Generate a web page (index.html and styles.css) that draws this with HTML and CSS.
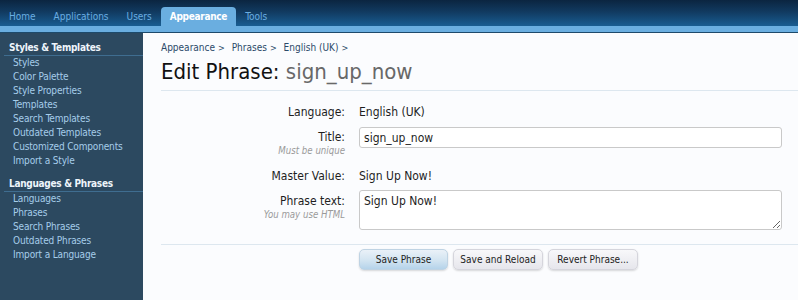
FILE: index.html
```html
<!DOCTYPE html>
<html lang="en">
<head>
<meta charset="utf-8">
<title>Edit Phrase: sign_up_now</title>
<link rel="stylesheet" href="styles.css">
</head>
<body>
<header class="topbar">
  <nav class="tabs">
    <a class="tab">Home</a>
    <a class="tab">Applications</a>
    <a class="tab">Users</a>
    <a class="tab tab-active">Appearance</a>
    <a class="tab">Tools</a>
  </nav>
</header>
<div class="strip"></div>
<div class="main">
  <aside class="sidebar">
    <div class="side-group">
      <h3 class="side-heading">Styles &amp; Templates</h3>
      <ul class="side-list">
        <li>Styles</li>
        <li>Color Palette</li>
        <li>Style Properties</li>
        <li>Templates</li>
        <li>Search Templates</li>
        <li>Outdated Templates</li>
        <li>Customized Components</li>
        <li>Import a Style</li>
      </ul>
    </div>
    <div class="side-group">
      <h3 class="side-heading">Languages &amp; Phrases</h3>
      <ul class="side-list">
        <li>Languages</li>
        <li>Phrases</li>
        <li>Search Phrases</li>
        <li>Outdated Phrases</li>
        <li>Import a Language</li>
      </ul>
    </div>
  </aside>
  <section class="content">
    <div class="crumbs">
      <span class="crumb">Appearance</span><span class="arrow">&gt;</span>
      <span class="crumb">Phrases</span><span class="arrow">&gt;</span>
      <span class="crumb">English (UK)</span><span class="arrow">&gt;</span>
    </div>
    <h1 class="title">Edit Phrase: <span class="title-sub">sign_up_now</span></h1>
    <form class="form">
      <div class="row row-lang">
        <div class="label">Language:</div>
        <div class="value">English (UK)</div>
      </div>
      <div class="row row-title">
        <div class="label label-input">Title:<span class="hint">Must be unique</span></div>
        <div class="value"><input class="text-input" type="text" value="sign_up_now"></div>
      </div>
      <div class="row row-master">
        <div class="label">Master Value:</div>
        <div class="value">Sign Up Now!</div>
      </div>
      <div class="row row-text">
        <div class="label label-area">Phrase text:<span class="hint">You may use HTML</span></div>
        <div class="value"><textarea class="text-area">Sign Up Now!</textarea></div>
      </div>
      <div class="buttons">
        <button type="button" class="btn btn-primary">Save Phrase</button>
        <button type="button" class="btn">Save and Reload</button>
        <button type="button" class="btn">Revert Phrase...</button>
      </div>
    </form>
  </section>
</div>
</body>
</html>
```
FILE: styles.css
```css
* { box-sizing: border-box; }
html, body { margin: 0; padding: 0; }
body {
  width: 798px;
  height: 300px;
  overflow: hidden;
  font-family: "DejaVu Sans Condensed", "DejaVu Sans", sans-serif;
  font-size: 11px;
  background: #fbfcfe;
  color: #1a1a1a;
}

.topbar {
  height: 26px;
  background: linear-gradient(to bottom, #0b2540 0%, #113a60 45%, #195d92 100%);
  display: flex;
  align-items: flex-end;
}
.tabs { display: flex; padding-left: 0; }
.tab {
  display: block;
  height: 19px;
  line-height: 20px;
  padding: 0 9px;
  margin-right: 0;
  color: #6aaee2;
  font-size: 10px;
  border-radius: 4px 4px 0 0;
}
.tab-active {
  background: #6aaee0;
  color: #ffffff;
  font-weight: bold;
  letter-spacing: -0.3px;
}
.strip {
  height: 7px;
  background: #6aaee0;
  border-bottom: 1px solid #1d4a6b;
}

.main { display: flex; height: 267px; }

.sidebar {
  width: 143px;
  flex: none;
  background: #2c4960;
  padding-top: 8px;
}
.side-group + .side-group { margin-top: 9px; }
.side-heading {
  margin: 0 0 0 4px;
  padding-left: 5px;
  font-size: 10px;
  line-height: 14px;
  font-weight: bold;
  letter-spacing: -0.3px;
  color: #eef5fb;
  border-bottom: 1px solid #3f6d90;
}
.side-list { list-style: none; margin: 0; padding: 0; }
.side-list li {
  padding-left: 13px;
  line-height: 14px;
  color: #a6cdea;
  font-size: 10px;
  letter-spacing: -0.15px;
}

.content {
  flex: 1;
  padding: 8px 0 0 18px;
  background: #fbfcfe;
}
.crumbs {
  line-height: 14px;
  color: #2b4a69;
  font-size: 10px;
}
.crumb { margin-right: 3px; }
.arrow { margin-right: 4px; font-size: 9px; }

.title {
  margin: 3px 0 0;
  font-size: 22px;
  font-weight: normal;
  line-height: 28px;
  color: #111111;
  padding-bottom: 4px;
  border-bottom: 1px solid #dde7ef;
}
.title-sub { color: #686868; }

.form { padding-top: 13px; padding-right: 16px; }
.row {
  display: grid;
  grid-template-columns: 184px 1fr;
  column-gap: 14px;
  font-size: 12px;
  line-height: 16px;
  color: #1e1e1e;
}
.label { text-align: right; }
.hint {
  display: block;
  font-size: 9.6px;
  line-height: 11px;
  font-style: italic;
  color: #9a9a9a;
}
.row-lang { margin-bottom: 7px; }
.row-title { margin-bottom: 12px; }
.row-master { margin-bottom: 6px; }
.row-text {
  margin-right: -16px;
  padding-right: 16px;
  padding-bottom: 14px;
  border-bottom: 1px solid #dde7ef;
}
.label-input { padding-top: 2px; }
.label-area { padding-top: 3px; }

.text-input {
  display: block;
  width: 100%;
  height: 21px;
  padding: 0 4px;
  font-family: inherit;
  font-size: 12px;
  color: #1e1e1e;
  background: #ffffff;
  border: 1px solid #c9c9c9;
  border-radius: 3px;
}
.text-area {
  display: block;
  width: 100%;
  height: 40px;
  padding: 2px 4px;
  font-family: inherit;
  font-size: 12px;
  line-height: 16px;
  color: #1e1e1e;
  background: #ffffff;
  border: 1px solid #c9c9c9;
  border-radius: 3px;
}

.buttons {
  display: flex;
  gap: 5px;
  padding-top: 4px;
  padding-left: 198px;
}
.btn {
  min-width: 90px;
  height: 21px;
  padding: 0 6px;
  font-family: inherit;
  font-size: 10px;
  color: #222222;
  background: linear-gradient(to bottom, #f8f8fa 0%, #e6e6ec 100%);
  border: 1px solid #d5d5dc;
  border-radius: 5px;
  box-shadow: 0 1px 2px rgba(0, 0, 0, 0.15);
}
.btn-primary {
  min-width: 89px;
  background: linear-gradient(to bottom, #eaf1f8 0%, #d2e4f1 55%, #b5d3ea 100%);
  border-color: #bfd3e3;
}
```
